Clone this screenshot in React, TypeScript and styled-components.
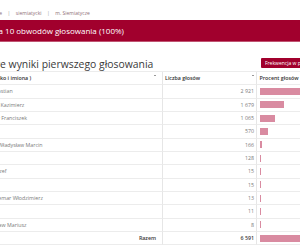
import styled, { createGlobalStyle } from 'styled-components'

interface ICandidate {
  name: string
  votes: number
}

const candidates: ICandidate[] = [
  { name: 'Kowalczyk Jan Sebastian', votes: 2921 },
  { name: 'Kowalewski Michał Kazimierz', votes: 1679 },
  { name: 'Michalkiewicz Piotr Franciszek', votes: 1065 },
  { name: 'Sokołowski Adam', votes: 570 },
  { name: 'Wierzbicki-Nowak Władysław Marcin', votes: 166 },
  { name: 'Nowak Anna Maria', votes: 128 },
  { name: 'Zieliński Tomasz Józef', votes: 15 },
  { name: 'Kamiński Jan', votes: 15 },
  { name: 'Romanowski Waldemar Włodzimierz', votes: 13 },
  { name: 'Zając Ewa', votes: 11 },
  { name: 'Wojtkowski Stanisław Mariusz', votes: 8 },
]

const total = candidates.reduce((sum, c) => sum + c.votes, 0)

// 6591 -> "6 591"
const formatVotes = (n: number) => String(n).replace(/\B(?=(\d{3})+(?!\d))/g, ' ')

const GlobalStyle = createGlobalStyle`
  html, body {
    margin: 0;
    padding: 0;
    background: #fff;
  }
  body {
    width: 300px;
    height: 250px;
    overflow: hidden;
    font-family: 'Open Sans', 'Liberation Sans', sans-serif;
    color: #444;
  }
`

const Page = styled.div`
  margin-left: -55px;
  width: 430px;
`

const Breadcrumb = styled.nav`
  display: flex;
  align-items: center;
  padding: 10px 0 0 6px;
  height: 6px;
  font-size: 5px;
  line-height: 6px;
  white-space: nowrap;
`

const Crumb = styled.span`
  color: #8e6f76;
`

const Separator = styled.span`
  margin: 0 5.5px;
  color: #9a9a9a;
`

const ResultBar = styled.div`
  margin-top: 4px;
  height: 21px;
  padding-left: 20px;
  display: flex;
  align-items: center;
  background: #a1002d;
  border-bottom: 1px solid #c05572;
  color: #fff;
  font-size: 8px;
  white-space: nowrap;
`

const TitleRow = styled.div`
  display: flex;
  align-items: flex-start;
  margin-top: 16px;
  height: 13px;
`

const Title = styled.h2`
  flex: 0 0 316px;
  margin: 0;
  font-size: 10.4px;
  line-height: 13px;
  font-weight: 400;
  color: #3a3a3a;
  white-space: nowrap;
`

const TurnoutButton = styled.button`
  height: 10px;
  padding: 0 4px;
  border: 0;
  border-radius: 1px;
  background: #a1002d;
  color: #fff;
  font-family: inherit;
  font-size: 5px;
  line-height: 10px;
  white-space: nowrap;
`

const Table = styled.div`
  display: grid;
  grid-template-columns: 218px 94px 110px;
  border-top: 1px solid #ececec;
  font-size: 5.3px;
`

const Cell = styled.div<{ $align?: 'left' | 'right'; $divider?: boolean; $head?: boolean; $strong?: boolean }>`
  box-sizing: border-box;
  height: 13.33px;
  display: flex;
  align-items: center;
  justify-content: ${({ $align }) => ($align === 'right' ? 'flex-end' : 'flex-start')};
  border-bottom: 1px solid #ececec;
  border-right: ${({ $divider }) => ($divider ? '1px solid #e6e6e6' : '0')};
  white-space: nowrap;
  overflow: hidden;
  color: ${({ $head, $strong }) => ($head ? '#333' : $strong ? '#3a3a3a' : '#7a7a7a')};
  font-weight: ${({ $head, $strong }) => ($head || $strong ? 600 : 400)};
`

const NameCell = styled(Cell)`
  padding: 0 6px 0 8px;
`

const VotesCell = styled(Cell)`
  padding: 0 2px;
`

const PercentCell = styled(Cell)`
  padding: 0 2.5px;
`

const HeadLabel = styled.span`
  flex: 1;
`

const SortMark = styled.span`
  align-self: flex-start;
  margin-top: 3px;
  width: 0;
  height: 0;
  border-left: 1px solid transparent;
  border-right: 1px solid transparent;
  border-bottom: 1.5px solid #333;
`

const BarTrack = styled.div`
  width: 98px;
  height: 7px;
`

const Bar = styled.div`
  height: 100%;
  background: #d98ba1;
`

const PercentBar = ({ votes }: { votes: number }) => (
  <BarTrack>
    <Bar style={{ width: `${(votes / total) * 100}%` }} />
  </BarTrack>
)

const Row = ({ candidate }: { candidate: ICandidate }) => (
  <>
    <NameCell $divider>{candidate.name}</NameCell>
    <VotesCell $align="right" $divider>
      {formatVotes(candidate.votes)}
    </VotesCell>
    <PercentCell>
      <PercentBar votes={candidate.votes} />
    </PercentCell>
  </>
)

export default function App() {
  return (
    <>
      <GlobalStyle />
      <Page>
        <Breadcrumb>
          <Crumb>Polska</Crumb>
          <Separator>|</Separator>
          <Crumb>podlaskie</Crumb>
          <Separator>|</Separator>
          <Crumb>siemiatycki</Crumb>
          <Separator>|</Separator>
          <Crumb>m. Siemiatycze</Crumb>
        </Breadcrumb>

        <ResultBar>Wyniki dla 10 obwodów głosowania (100%)</ResultBar>

        <TitleRow>
          <Title>Szczegółowe wyniki pierwszego głosowania</Title>
          <TurnoutButton>Frekwencja w poszczególnych obwodach</TurnoutButton>
        </TitleRow>

        <Table>
          <NameCell $head $divider>
            <HeadLabel>Kandydat ( Nazwisko i imiona )</HeadLabel>
            <SortMark />
          </NameCell>
          <VotesCell $head $divider>
            <HeadLabel>Liczba głosów</HeadLabel>
            <SortMark />
          </VotesCell>
          <PercentCell $head>
            <HeadLabel>Procent głosów</HeadLabel>
          </PercentCell>

          {candidates.map((c) => (
            <Row key={c.name} candidate={c} />
          ))}

          <NameCell $align="right" $divider $strong>
            Razem
          </NameCell>
          <VotesCell $align="right" $divider $strong>
            {formatVotes(total)}
          </VotesCell>
          <PercentCell>
            <PercentBar votes={total} />
          </PercentCell>
        </Table>
      </Page>
    </>
  )
}
